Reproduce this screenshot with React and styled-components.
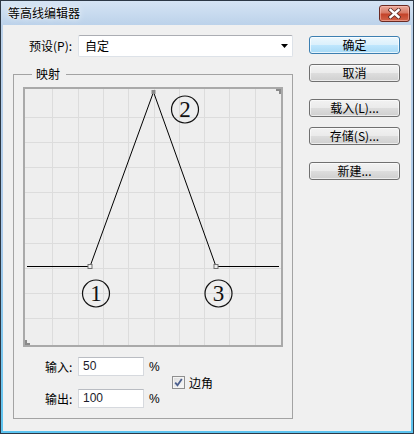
import React from "react";
import styled, { createGlobalStyle } from "styled-components";

const GlobalStyle = createGlobalStyle`
  html, body {
    margin: 0;
    padding: 0;
    background: #ffffff;
  }
  body {
    font-family: "Liberation Sans", "Noto Sans CJK SC", sans-serif;
    font-size: 12px;
    color: #000;
  }
`;

const Window = styled.div`
  width: 414px;
  height: 434px;
  box-sizing: border-box;
  border: 1px solid #2c3845;
  background: linear-gradient(to bottom, #d5e4f4 0, #bcd2ea 24px, #a9c9ea 55%, #5cc4f0 100%);
  display: flex;
  flex-direction: column;
`;

const TitleBar = styled.div`
  height: 24px;
  flex: none;
  display: flex;
  justify-content: space-between;
  align-items: flex-start;
  padding: 0 3px 0 7px;
`;

const Title = styled.div`
  line-height: 24px;
  font-size: 12px;
  font-family: "Noto Sans CJK SC", sans-serif;
  color: #000;
  text-shadow: 0 0 6px rgba(255, 255, 255, 0.95), 0 0 2px rgba(255, 255, 255, 0.9);
`;

const CloseButton = styled.button`
  margin-top: 4px;
  width: 31px;
  height: 17px;
  padding: 0;
  border: 1px solid #6a2a22;
  border-radius: 3px;
  background: linear-gradient(to bottom, #e9a99b 0%, #d87a66 45%, #c4432a 55%, #d2644a 100%);
  box-shadow: inset 0 0 0 1px rgba(255, 200, 190, 0.5);
  display: flex;
  align-items: center;
  justify-content: center;
`;

const Client = styled.div`
  flex: 1;
  margin: 0 2px 2px;
  background: #f0f0f0;
  display: flex;
  gap: 16px;
  padding: 10px 0 0 10px;
`;

const LeftColumn = styled.div`
  width: 280px;
  display: flex;
  flex-direction: column;
`;

const PresetRow = styled.div`
  height: 22px;
  display: flex;
  align-items: center;
`;

const Label = styled.span`
  font-family: "Noto Sans CJK SC", sans-serif;
  font-size: 12px;
  line-height: 14px;
  white-space: nowrap;
`;

const PresetLabel = styled(Label)`
  width: 65px;
  box-sizing: border-box;
  padding-left: 16px;
`;

const Select = styled.div`
  flex: 1;
  height: 22px;
  box-sizing: border-box;
  border: 1px solid #dde2e8;
  border-top-color: #abadb3;
  border-radius: 2px;
  background: #ffffff;
  display: flex;
  align-items: center;
  justify-content: space-between;
  padding: 0 4px 0 6px;
`;

const GroupBox = styled.fieldset`
  margin: 10px 0 0;
  width: 280px;
  box-sizing: border-box;
  border: 1px solid #a3a3a3;
  padding: 6px 9px 10px 9px;
  min-width: 0;
`;

const Legend = styled.legend`
  margin-left: 9px;
  padding: 0 6px 0 4px;
  font-family: "Noto Sans CJK SC", sans-serif;
  font-size: 12px;
  line-height: 14px;
`;

const Graph = styled.div`
  width: 260px;
  height: 260px;
  box-sizing: border-box;
  border: 2px solid #a9a9a9;
  background: #eeeeee;
  svg {
    display: block;
  }
`;

const Fields = styled.div`
  margin-top: 10px;
  display: grid;
  grid-template-columns: 33px 66px 17px auto;
  grid-template-rows: 19px 19px;
  row-gap: 13px;
  align-items: center;
  padding-left: 22px;
`;

const Field = styled.div`
  height: 19px;
  box-sizing: border-box;
  border: 1px solid #d6d9de;
  border-top-color: #b9bcc2;
  background: #ffffff;
  padding-left: 4px;
  font-family: "Liberation Sans", sans-serif;
  font-size: 12px;
  line-height: 17px;
  color: #1b1b2b;
`;

const Percent = styled.span`
  padding-left: 5px;
  font-family: "Liberation Sans", sans-serif;
  font-size: 12px;
`;

const CheckRow = styled.label`
  grid-column: 4;
  grid-row: 1 / 3;
  margin-left: 11px;
  display: flex;
  align-items: center;
  gap: 4px;
`;

const CheckBox = styled.span`
  width: 13px;
  height: 13px;
  box-sizing: border-box;
  border: 1px solid #8f8f8f;
  background: linear-gradient(135deg, #dcdcdc, #fafafa);
  box-shadow: inset 0 0 0 1px #f4f4f4;
  display: flex;
  align-items: center;
  justify-content: center;
`;

const RightColumn = styled.div`
  width: 91px;
  padding-top: 1px;
  display: flex;
  flex-direction: column;
`;

const ButtonGroup = styled.div`
  display: flex;
  flex-direction: column;
  gap: 10px;
  margin-top: ${(p) => (p.$first ? 0 : 17)}px;
`;

const Button = styled.button`
  height: 18px;
  width: 91px;
  padding: 0;
  box-sizing: border-box;
  border: 1px solid ${(p) => (p.$primary ? "#3c7fb1" : "#707070")};
  border-radius: 3px;
  font-family: "Noto Sans CJK SC", sans-serif;
  font-size: 12px;
  line-height: 14px;
  color: #000;
  background: ${(p) =>
    p.$primary
      ? "linear-gradient(to bottom, #ecf7fd 0%, #dbf0fc 48%, #bee6fd 52%, #a7d9f5 100%)"
      : "linear-gradient(to bottom, #f2f2f2 0%, #ebebeb 48%, #dddddd 52%, #cfcfcf 100%)"};
  box-shadow: inset 0 0 0 1px ${(p) => (p.$primary ? "rgba(255,255,255,0.7)" : "rgba(255,255,255,0.6)")};
`;

const lines = Array.from({ length: 9 }, (_, i) => i + 1);

const Circled = ({ cx, cy, n }) => (
  <g>
    <circle cx={cx} cy={cy} r="13.5" fill="none" stroke="#111" strokeWidth="1.2" />
    <text
      x={cx}
      y={cy + 7.5}
      textAnchor="middle"
      fontFamily="Liberation Serif, serif"
      fontSize="23"
      fill="#111"
    >
      {n}
    </text>
  </g>
);

const CurveChart = () => (
  <svg width="256" height="256" viewBox="0 0 256 256">
    {lines.map((k) => (
      <line
        key={"v" + k}
        x1={Math.round(2 + 25.3 * k) + 0.5}
        x2={Math.round(2 + 25.3 * k) + 0.5}
        y1="0"
        y2="256"
        stroke="#dcdcdc"
      />
    ))}
    {lines.map((k) => (
      <line
        key={"h" + k}
        y1={Math.round(3 + 25.1 * k) + 0.5}
        y2={Math.round(3 + 25.1 * k) + 0.5}
        x1="0"
        x2="256"
        stroke="#dcdcdc"
      />
    ))}
    <polyline points="251,1 255,1 255,5" fill="none" stroke="#8a8a8a" strokeWidth="2" />
    <polyline points="1,251 1,255 5,255" fill="none" stroke="#8a8a8a" strokeWidth="2" />
    <path
      d="M2 177.5 L65 177.5 L128.5 3 L191 177.5 L254 177.5"
      fill="none"
      stroke="#000"
      strokeWidth="1"
    />
    <rect x="63" y="175.5" width="4" height="4" fill="#eeeeee" stroke="#707070" />
    <rect x="189" y="175.5" width="4" height="4" fill="#eeeeee" stroke="#707070" />
    <rect x="126.5" y="1" width="4" height="4" fill="#8a8a8a" />
    <Circled cx={71} cy={204.5} n="1" />
    <Circled cx={160} cy={20.5} n="2" />
    <Circled cx={193.5} cy={204.5} n="3" />
  </svg>
);

export default function App() {
  return (
    <>
      <GlobalStyle />
      <Window>
        <TitleBar>
          <Title>等高线编辑器</Title>
          <CloseButton aria-label="关闭">
            <svg width="13" height="11" viewBox="0 0 13 11">
              <path d="M2.5 2 L10.5 9 M10.5 2 L2.5 9" stroke="#5b2a24" strokeWidth="4" strokeLinecap="square" />
              <path d="M2.5 2 L10.5 9 M10.5 2 L2.5 9" stroke="#ffffff" strokeWidth="2.4" strokeLinecap="square" />
            </svg>
          </CloseButton>
        </TitleBar>
        <Client>
          <LeftColumn>
            <PresetRow>
              <PresetLabel>预设(P):</PresetLabel>
              <Select>
                <Label>自定</Label>
                <svg width="7" height="4" viewBox="0 0 7 4">
                  <polygon points="0,0 7,0 3.5,4" fill="#000" />
                </svg>
              </Select>
            </PresetRow>
            <GroupBox>
              <Legend>映射</Legend>
              <Graph>
                <CurveChart />
              </Graph>
              <Fields>
                <Label>输入:</Label>
                <Field>50</Field>
                <Percent>%</Percent>
                <CheckRow>
                  <CheckBox>
                    <svg width="9" height="9" viewBox="0 0 9 9">
                      <path d="M1.2 4.6 L3.5 7.2 L7.8 1" fill="none" stroke="#4b5f8e" strokeWidth="1.8" />
                    </svg>
                  </CheckBox>
                  <Label>边角</Label>
                </CheckRow>
                <Label>输出:</Label>
                <Field>100</Field>
                <Percent>%</Percent>
              </Fields>
            </GroupBox>
          </LeftColumn>
          <RightColumn>
            <ButtonGroup $first>
              <Button $primary>确定</Button>
              <Button>取消</Button>
            </ButtonGroup>
            <ButtonGroup>
              <Button>载入(L)...</Button>
              <Button>存储(S)...</Button>
            </ButtonGroup>
            <ButtonGroup>
              <Button>新建...</Button>
            </ButtonGroup>
          </RightColumn>
        </Client>
      </Window>
    </>
  );
}
